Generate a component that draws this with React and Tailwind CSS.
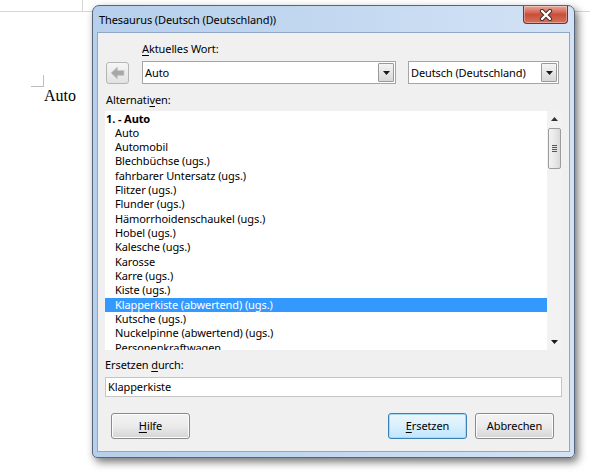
const items = [
  "Auto",
  "Automobil",
  "Blechbüchse (ugs.)",
  "fahrbarer Untersatz (ugs.)",
  "Flitzer (ugs.)",
  "Flunder (ugs.)",
  "Hämorrhoidenschaukel (ugs.)",
  "Hobel (ugs.)",
  "Kalesche (ugs.)",
  "Karosse",
  "Karre (ugs.)",
  "Kiste (ugs.)",
  "Klapperkiste (abwertend) (ugs.)",
  "Kutsche (ugs.)",
  "Nuckelpinne (abwertend) (ugs.)",
  "Personenkraftwagen",
];

function DownTri() {
  return (
    <svg width="7" height="4" viewBox="0 0 7 4">
      <path d="M0 0 H7 L3.5 4 Z" fill="#1a1a1a" />
    </svg>
  );
}

function UpTri() {
  return (
    <svg width="7" height="4" viewBox="0 0 7 4">
      <path d="M0 4 H7 L3.5 0 Z" fill="#333" />
    </svg>
  );
}

function Combo({ text, w }) {
  return (
    <div className={`${w} h-[23px] flex items-stretch border border-[#a5a5a5] bg-white`}>
      <div className="flex-1 flex items-center pl-[2px] text-black leading-none whitespace-nowrap overflow-hidden">{text}</div>
      <div className="w-[16px] m-[1px] flex items-center justify-center border border-[#9a9a9a] rounded-[1px] bg-gradient-to-b from-[#f4f4f4] to-[#d8d8d8]">
        <DownTri />
      </div>
    </div>
  );
}

function Btn({ children, def }) {
  return (
    <div
      className={`w-[79px] h-[26px] rounded-[3px] border flex items-center justify-center text-black ${
        def
          ? "border-[#3c7fb1] bg-gradient-to-b from-[#eaf6fd] via-[#d9f0fc] to-[#bee6fd] shadow-[inset_0_0_0_1px_#a7d9f5]"
          : "border-[#8a8a8a] bg-gradient-to-b from-[#f3f3f3] via-[#ebebeb] to-[#d5d5d5] shadow-[inset_0_0_0_1px_#fcfcfc]"
      }`}
    >
      {children}
    </div>
  );
}

export default function App() {
  return (
    <div className="relative w-[590px] h-[474px] bg-white overflow-hidden font-['Noto_Sans',sans-serif]">
      {/* document background */}
      <div className="h-[12px] border-b border-[#d6d6d6] flex">
        <div className="w-[83px] h-full border-r border-[#d6d6d6]" />
      </div>
      <div className="ml-[31px] mt-[63px] w-[13px] h-[12px] border-r border-b border-[#bdbdbd]" />
      <div className="ml-[44px] font-['Liberation_Serif',serif] text-[16px] leading-[18px] text-black">Auto</div>

      {/* dialog window */}
      <div className="absolute left-[92px] top-[5px] w-[483px] h-[453px] rounded-t-[7px] rounded-b-[5px] border border-[#5a6478] bg-gradient-to-r from-[#b6cfec] via-[#c3d8f0] to-[#d3e3f5] shadow-[3px_4px_9px_rgba(0,0,0,0.55)] flex flex-col text-[11px] tracking-[-0.1px]">
        <div className="h-[26px] flex items-start justify-between">
          <div className="pl-[6px] pt-[6px] leading-[15px] text-black">Thesaurus (Deutsch (Deutschland))</div>
          <div className="mr-[6px] w-[45px] h-[18px] rounded-b-[4px] border border-t-0 border-[#7d2f22] bg-gradient-to-b from-[#e9a99a] via-[#c94f3a] to-[#d6705a] flex items-center justify-center shadow-[inset_0_0_0_1px_rgba(255,255,255,0.35)]">
            <svg width="14" height="12" viewBox="0 0 14 12">
              <path d="M3 2 L11 10 M11 2 L3 10" stroke="#3b2a28" strokeWidth="4.2" strokeLinecap="round" />
              <path d="M3 2 L11 10 M11 2 L3 10" stroke="#ffffff" strokeWidth="2.4" strokeLinecap="round" />
            </svg>
          </div>
        </div>

        {/* client area */}
        <div className="mx-[4px] mb-[5px] flex-1 border border-[#8fa6c4] bg-[#f0f0f0] px-[7px] flex flex-col text-black">
          <div className="mt-[8px] ml-[37px] leading-[15px]">
            <span className="underline underline-offset-2">A</span>ktuelles Wort:
          </div>
          <div className="mt-[5px] flex items-center h-[23px]">
            <div className="ml-[1px] w-[23px] h-[22px] rounded-[3px] border border-[#b5b5b5] bg-gradient-to-b from-[#f6f6f6] to-[#e2e2e2] flex items-center justify-center">
              <svg width="15" height="14" viewBox="0 0 15 14">
                <path d="M1 7 L7.5 1 V4.5 H14 V9.5 H7.5 V13 Z" fill="#a7a7a7" stroke="#c9c9c9" strokeWidth="0.8" strokeLinejoin="round" />
              </svg>
            </div>
            <div className="ml-[13px]">
              <Combo text="Auto" w="w-[254px]" />
            </div>
            <div className="ml-[12px]">
              <Combo text="Deutsch (Deutschland)" w="w-[151px]" />
            </div>
          </div>
          <div className="mt-[8px] ml-[1px] leading-[15px]">
            Alternati<span className="underline underline-offset-2">v</span>en:
          </div>
          <div className="mt-[4px] h-[239px] flex bg-white">
            <div className="flex-1 overflow-hidden pt-[0.5px]">
              <div className="pl-[1px] leading-[14.33px] font-bold">1. - Auto</div>
              {items.map((t) => (
                <div
                  key={t}
                  className={`pl-[10px] leading-[14.33px] whitespace-nowrap ${
                    t.startsWith("Klapperkiste") ? "bg-[#3399ff] text-white" : ""
                  }`}
                >
                  {t}
                </div>
              ))}
            </div>
            <div className="w-[15px] bg-[#f2f2f2] flex flex-col items-center">
              <div className="h-[16px] flex items-center justify-center">
                <UpTri />
              </div>
              <div className="mt-[1px] w-[13px] h-[41px] rounded-[2px] border border-[#9c9c9c] bg-gradient-to-r from-[#f3f3f3] via-[#e9e9e9] to-[#d9d9d9] flex flex-col items-center justify-center gap-[1px]">
                <div className="w-[5px] h-[1px] bg-[#555]" />
                <div className="w-[5px] h-[1px] bg-[#555]" />
                <div className="w-[5px] h-[1px] bg-[#555]" />
                <div className="w-[5px] h-[1px] bg-[#555]" />
              </div>
              <div className="flex-1" />
              <div className="h-[16px] flex items-center justify-center">
                <DownTri />
              </div>
            </div>
          </div>
          <div className="mt-[7px] leading-[15px]">
            Ersetzen <span className="underline underline-offset-2">d</span>urch:
          </div>
          <div className="mt-[5px] h-[20px] border border-[#c5c5c5] bg-white flex items-center pl-[2px]">Klapperkiste</div>
          <div className="mt-[16px] pl-[6px] pr-[8px] flex justify-between">
            <Btn>
              <span className="underline underline-offset-2">H</span>ilfe
            </Btn>
            <div className="flex gap-[8px]">
              <Btn def>
                <span className="underline underline-offset-2">E</span>rsetzen
              </Btn>
              <Btn>Abbrechen</Btn>
            </div>
          </div>
        </div>
      </div>
    </div>
  );
}
